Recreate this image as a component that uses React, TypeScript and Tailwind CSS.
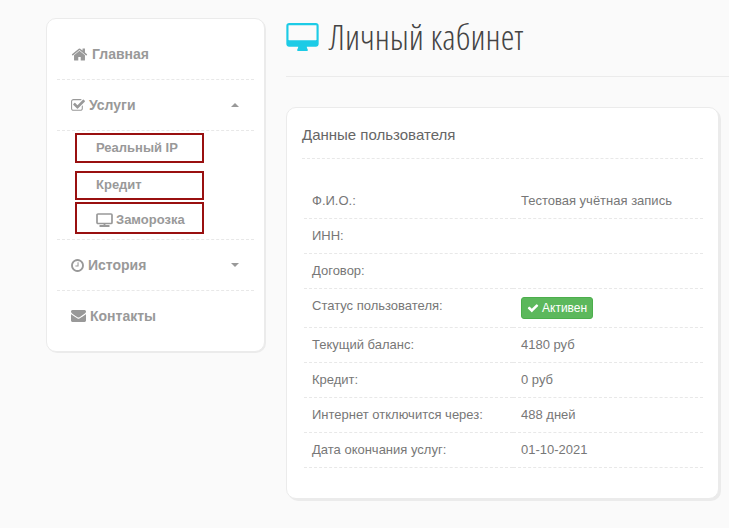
import { ReactNode, useState } from "react";

const ICONS = {
  home: "M1472 992v480q0 26-19 45t-45 19h-384v-384h-256v384h-384q-26 0-45-19t-19-45v-480q0-1 .5-3t.5-3l575-474 575 474q1 2 1 6zm223-69l-62 74q-8 9-21 11h-3q-13 0-21-7l-692-577-692 577q-12 8-24 7-13-2-21-11l-62-74q-8-10-7-23.5t11-21.5l719-599q32-26 76-26t76 26l244 204v-195q0-14 9-23t23-9h192q14 0 23 9t9 23v408l219 182q10 8 11 21.5t-7 23.5z",
  checkSquare:
    "M1472 930v318q0 119-84.5 203.5t-203.5 84.5h-832q-119 0-203.5-84.5t-84.5-203.5v-832q0-119 84.5-203.5t203.5-84.5h832q63 0 117 25 15 7 18 23 3 17-9 29l-49 49q-10 10-23 10-3 0-9-2-23-6-45-6h-832q-66 0-113 47t-47 113v832q0 66 47 113t113 47h832q66 0 113-47t47-113v-254q0-13 9-22l64-64q10-10 23-10 6 0 12 3 20 8 20 29zm231-489l-814 814q-24 24-57 24t-57-24l-430-430q-24-24-24-57t24-57l110-110q24-24 57-24t57 24l263 263 647-647q24-24 57-24t57 24l110 110q24 24 24 57t-24 57z",
  clock:
    "M1024 544v448q0 14-9 23t-23 9h-320q-14 0-23-9t-9-23v-64q0-14 9-23t23-9h224v-352q0-14 9-23t23-9h64q14 0 23 9t9 23zm416 352q0-148-73-273t-198-198-273-73-273 73-198 198-73 273 73 273 198 198 273 73 273-73 198-198 73-273zm224 0q0 209-103 385.5t-279.5 279.5-385.5 103-385.5-103-279.5-279.5-103-385.5 103-385.5 279.5-279.5 385.5-103 385.5 103 279.5 279.5 103 385.5z",
  envelope:
    "M1792 710v794q0 66-47 113t-113 47h-1472q-66 0-113-47t-47-113v-794q44 49 101 87 362 246 497 345 57 42 92.5 65.5t94.5 48 110 24.5h2q51 0 110-24.5t94.5-48 92.5-65.5q170-123 498-345 57-39 100-87zm0-294q0 79-49 151t-122 123q-376 261-468 325-10 7-42.5 31t-54 38.5-52 32.5-57.5 27-50 9h-2q-23 0-50-9t-57.5-27-52-32.5-54-38.5-42.5-31q-91-64-262-182.5t-205-142.5q-62-42-117-115.5t-55-136.5q0-78 41.5-130t118.5-52h1472q65 0 112.5 47t47.5 113z",
  check:
    "M1671 566q0 40-28 68l-724 724-136 136q-28 28-68 28t-68-28l-136-136-362-362q-28-28-28-68t28-68l136-136q28-28 68-28t68 28l294 295 656-657q28-28 68-28t68 28l136 136q28 28 28 68z",
  desktop:
    "M1792 992v-832q0-13-9.5-22.5t-22.5-9.5h-1600q-13 0-22.5 9.5t-9.5 22.5v832q0 13 9.5 22.5t22.5 9.5h1600q13 0 22.5-9.5t9.5-22.5zm128-832v1088q0 66-47 113t-113 47h-544q0 37 16 77.5t32 71 16 43.5q0 26-19 45t-45 19h-512q-26 0-45-19t-19-45q0-14 16-44t32-70 16-78h-544q-66 0-113-47t-47-113v-1088q0-66 47-113t113-47h1600q66 0 113 47t47 113z",
};

function Icon({ d, box, className }: { d: string; box: string; className: string }) {
  return (
    <svg viewBox={box} className={className} fill="currentColor" aria-hidden="true">
      <path d={d} />
    </svg>
  );
}

function MonitorIcon() {
  return (
    <svg viewBox="0 0 17 14" className="h-[14px] w-[17px]" fill="none" stroke="currentColor" aria-hidden="true">
      <rect x="1" y="1" width="15" height="9.5" rx="1" strokeWidth="1.7" />
      <path d="M8.5 10.5V13M3.5 13H13.5" strokeWidth="1.8" />
    </svg>
  );
}

function Caret({ up }: { up: boolean }) {
  return (
    <svg viewBox="0 0 8 4" className="ml-auto h-1 w-2" fill="currentColor" aria-hidden="true">
      <path d={up ? "M0 4L4 0L8 4z" : "M0 0L4 4L8 0z"} />
    </svg>
  );
}

function MenuGroup({
  icon,
  label,
  initial = false,
  children,
}: {
  icon: ReactNode;
  label: string;
  initial?: boolean;
  children?: ReactNode;
}) {
  const [open, setOpen] = useState(initial);
  return (
    <li className="border-b border-dashed border-[#e8e8e8]">
      <button
        onClick={() => setOpen(!open)}
        aria-expanded={open}
        className="flex h-[50px] w-full items-center gap-1 pr-[15px] pl-[14px] font-bold"
      >
        {icon}
        {label}
        <Caret up={open} />
      </button>
      {open && children}
    </li>
  );
}

const SUB_LINK = "flex w-[129px] items-center gap-[3px] border-2 border-[#991010] pl-[19px]";

const ROWS: { label: string; value: ReactNode }[] = [
  { label: "Ф.И.О.:", value: "Тестовая учётная запись" },
  { label: "ИНН:", value: "" },
  { label: "Договор:", value: "" },
  {
    label: "Статус пользователя:",
    value: (
      <span className="my-[1px] inline-flex h-[22px] items-center gap-[3px] rounded-[3px] border border-[#4cae4c] bg-[#5cb85c] px-[5px] align-top text-xs text-white">
        <Icon d={ICONS.check} box="0 0 1792 1792" className="h-3 w-3" />
        Активен
      </span>
    ),
  },
  { label: "Текущий баланс:", value: "4180 руб" },
  { label: "Кредит:", value: "0 руб" },
  { label: "Интернет отключится через:", value: "488 дней" },
  { label: "Дата окончания услуг:", value: "01-10-2021" },
];

export default function App() {
  return (
    <div className="flex min-h-screen items-start gap-[21px] bg-[#fafafa] pl-[46px] font-['Liberation_Sans',Arial,sans-serif] text-[#777]">
      <nav className="mt-[18px] w-[219px] shrink-0 rounded-[10px] border border-[#ebebeb] bg-white px-[10px] py-[10px] text-sm font-bold text-[#999] shadow-[1px_1px_0_#ebebeb]">
        <ul>
          <li className="border-b border-dashed border-[#e8e8e8]">
            <a href="#home" className="flex h-[50px] items-center gap-1 pl-[14px]">
              <Icon d={ICONS.home} box="64 0 1664 1792" className="h-[17px] w-[17px]" />
              Главная
            </a>
          </li>
          <MenuGroup
            label="Услуги"
            initial
            icon={<Icon d={ICONS.checkSquare} box="64 0 1664 1792" className="h-[15px] w-[14px]" />}
          >
            <ul className="flex flex-col border-t border-dashed border-[#e8e8e8] pt-[2px] pb-[5px] pl-[18px] text-[13px]">
              <li>
                <a href="#ip" className={`${SUB_LINK} h-[30px]`}>
                  Реальный IP
                </a>
              </li>
              <li className="mt-2">
                <a href="#credit" className={`${SUB_LINK} h-[29px]`}>
                  Кредит
                </a>
              </li>
              <li className="mt-[2px]">
                <a href="#freeze" className={`${SUB_LINK} h-8 pt-1`}>
                  <MonitorIcon />
                  Заморозка
                </a>
              </li>
            </ul>
          </MenuGroup>
          <MenuGroup
            label="История"
            icon={<Icon d={ICONS.clock} box="128 0 1536 1792" className="h-[15px] w-[13px]" />}
          />
          <li>
            <a href="#contacts" className="flex h-[50px] items-center gap-1 pl-[14px]">
              <Icon d={ICONS.envelope} box="0 128 1792 1664" className="h-[14px] w-[15px]" />
              Контакты
            </a>
          </li>
        </ul>
      </nav>

      <main className="min-w-0 flex-1">
        <h1 className="flex h-[77px] items-center gap-[10px] border-b border-[#ebebeb] pb-[2px] font-['Open_Sans_Condensed_Light','Open_Sans_Condensed','Open_Sans',sans-serif] text-[35px] font-light text-[#444]">
          <Icon d={ICONS.desktop} box="0 0 1920 1664" className="h-[28px] w-[33px] text-[#1ccbe6]" />
          Личный кабинет
        </h1>

        <section className="mt-[30px] mr-[10px] rounded-[10px] border border-[#ebebeb] bg-white px-[15px] pb-[30px] shadow-[2px_2px_0_#ebebeb]">
          <h2 className="flex h-[51px] items-center border-b border-dashed border-[#e8e8e8] pt-[5px] text-[15px] text-[#666]">
            Данные пользователя
          </h2>
          <div className="pt-[25px] pl-[2px]">
            <table className="w-full border-collapse text-left text-[13px] leading-5">
              <tbody>
                {ROWS.map((r) => (
                  <tr key={r.label} className="border-b border-dashed border-[#e8e8e8]">
                    <th scope="row" className="w-[209px] px-2 py-[7px] align-top font-normal">
                      {r.label}
                    </th>
                    <td className="px-2 py-[7px] align-top">{r.value}</td>
                  </tr>
                ))}
              </tbody>
            </table>
          </div>
        </section>
      </main>
    </div>
  );
}
